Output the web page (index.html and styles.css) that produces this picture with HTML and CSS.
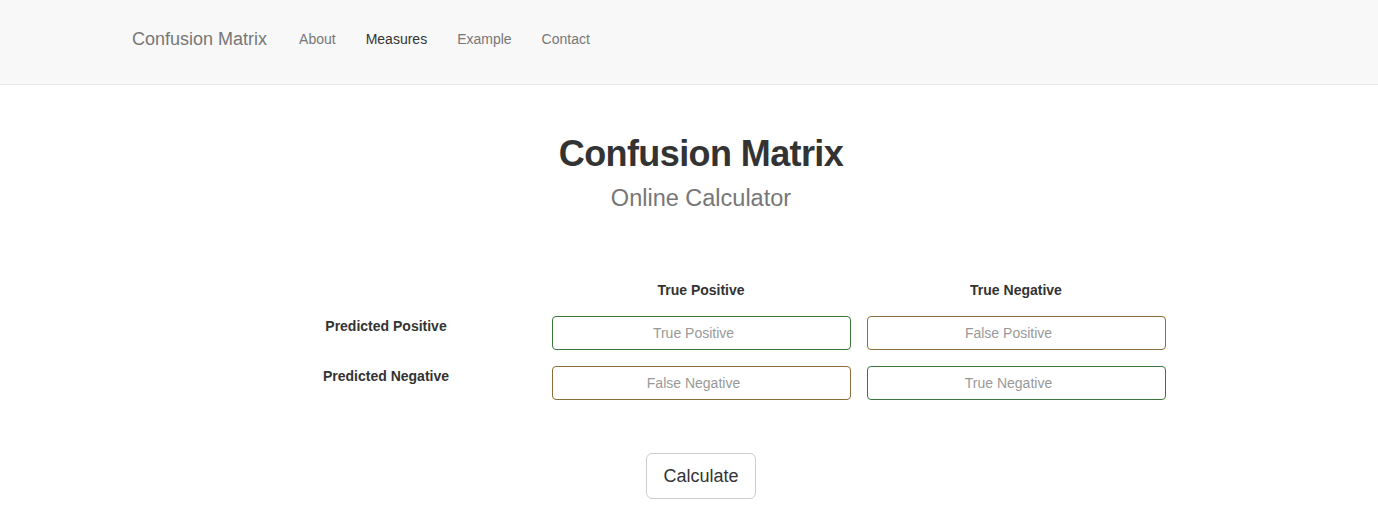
FILE: index.html
```html
<!DOCTYPE html>
<html>
<head>
<meta charset="utf-8">
<link rel="stylesheet" href="styles.css">
</head>
<body>
<nav class="navbar">
  <div class="nav-inner">
    <a class="brand" href="#">Confusion Matrix</a>
    <ul class="nav-links">
      <li><a href="#">About</a></li>
      <li><a class="active" href="#">Measures</a></li>
      <li><a href="#">Example</a></li>
      <li><a href="#">Contact</a></li>
    </ul>
  </div>
</nav>
<main class="main">
  <h1 class="title">Confusion Matrix</h1>
  <p class="subtitle">Online Calculator</p>
  <div class="matrix">
    <div class="cell"></div>
    <div class="cell head">True Positive</div>
    <div class="cell head">True Negative</div>
    <div class="cell label">Predicted Positive</div>
    <div class="cell"><input class="field success" placeholder="True Positive"></div>
    <div class="cell"><input class="field warning" placeholder="False Positive"></div>
    <div class="cell label">Predicted Negative</div>
    <div class="cell"><input class="field warning" placeholder="False Negative"></div>
    <div class="cell"><input class="field success" placeholder="True Negative"></div>
  </div>
  <div class="actions">
    <button class="btn">Calculate</button>
  </div>
</main>
</body>
</html>
```
FILE: styles.css
```css
* { box-sizing: border-box; }
html, body { margin: 0; padding: 0; }
body {
  font-family: "Liberation Sans", Arial, Helvetica, sans-serif;
  font-size: 14px;
  line-height: 20px;
  color: #333;
  background: #fff;
}
.navbar {
  background: #f8f8f8;
  border-bottom: 1px solid #e7e7e7;
  height: 85px;
  padding-top: 14px;
}
.nav-inner {
  width: 1170px;
  margin: 0 auto;
  padding: 0 15px 0 13px;
  display: flex;
  align-items: center;
}
.brand {
  font-size: 18px;
  line-height: 20px;
  padding: 15px 15px;
  color: #777;
  text-decoration: none;
}
.nav-links {
  list-style: none;
  margin: 0 0 0 2px;
  padding: 0;
  display: flex;
}
.nav-links a {
  display: block;
  padding: 15px 15px;
  line-height: 20px;
  color: #777;
  text-decoration: none;
}
.nav-links a.active { color: #333; }
.main {
  width: 1170px;
  margin: 0 auto;
  padding: 0 15px 0 39px;
}
.title {
  text-align: center;
  font-size: 36px;
  letter-spacing: -0.6px;
  font-weight: bold;
  line-height: 40px;
  margin: 49px 0 0;
  color: #333;
}
.subtitle {
  text-align: center;
  font-size: 23.5px;
  line-height: 28px;
  color: #777;
  margin: 10px 0 0;
}
.matrix {
  display: grid;
  grid-template-columns: repeat(3, 315px);
  justify-content: center;
  margin-top: 60px;
}
.cell {
  padding: 8px;
  text-align: center;
}
.head, .label {
  font-weight: bold;
  font-size: 14px;
}
.field {
  display: block;
  width: 100%;
  height: 34px;
  border: 1px solid #ccc;
  border-radius: 4px;
  font-family: inherit;
  font-size: 14px;
  text-align: center;
  color: #555;
  background: #fff;
  padding: 6px 27px 6px 12px;
}
.field::placeholder { color: #999; }
.field.success { border-color: #3c763d; }
.field.warning { border-color: #8a6d3b; }
.actions {
  display: flex;
  justify-content: center;
  margin-top: 45px;
}
.btn {
  font-family: inherit;
  font-size: 18px;
  line-height: 24px;
  padding: 10px 16px;
  border: 1px solid #ccc;
  border-radius: 6px;
  background: #fff;
  color: #333;
}
```
